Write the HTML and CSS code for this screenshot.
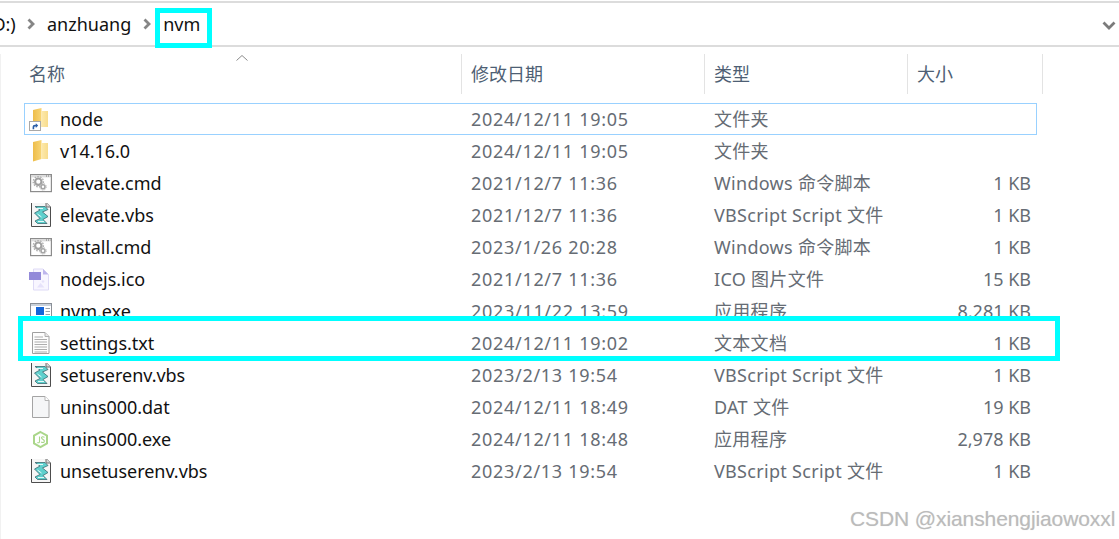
FILE: index.html
```html
<!DOCTYPE html>
<html lang="zh-CN">
<head>
<meta charset="utf-8">
<title>nvm</title>
<link rel="stylesheet" href="styles.css">
</head>
<body>
<svg class="defs" width="0" height="0" aria-hidden="true">
  <defs>
    <linearGradient id="fold-l" x1="0" y1="0" x2="1" y2="0"><stop offset="0" stop-color="#eebd4a"/><stop offset="1" stop-color="#f7d576"/></linearGradient>
    <linearGradient id="fold-r" x1="0" y1="0" x2="1" y2="0"><stop offset="0" stop-color="#fde9ac"/><stop offset="1" stop-color="#f8dc8c"/></linearGradient>
  </defs>
  <symbol id="folder" viewBox="0 0 24 24">
    <path d="M5 3 L13.5 1 V20 L5 22.5 Z" fill="url(#fold-l)"/>
    <path d="M13.5 4 H20 V20 H13.5 Z" fill="url(#fold-r)"/>
  </symbol>
  <symbol id="cmd" viewBox="0 0 24 24">
    <rect x="2.6" y="3.6" width="20.8" height="17" fill="#fff" stroke="#8c8c8c" stroke-width="1.2"/>
    <rect x="3" y="4" width="20" height="2.4" fill="#dcdcdc"/>
    <path d="M18 5 H19 M20 5 H21 M22 5 H22.6" stroke="#777"/>
    <circle cx="10.3" cy="10.7" r="3.2" fill="none" stroke="#a0a0a0" stroke-width="2.2"/>
    <circle cx="10.3" cy="10.7" r="5.1" fill="none" stroke="#b0b0b0" stroke-width="1.4" stroke-dasharray="1.6 1.2"/>
    <circle cx="15" cy="15.8" r="2" fill="#fff" stroke="#a6a6a6" stroke-width="1.6"/>
    <circle cx="15" cy="15.8" r="3.3" fill="none" stroke="#bbb" stroke-width="1" stroke-dasharray="1.3 1"/>
  </symbol>
  <symbol id="vbs" viewBox="0 0 24 24">
    <path d="M3.5 -.5 H18 L22.5 4 V23.5 H3.5 Z" fill="#f6f6f6" stroke="#4d4d4d"/>
    <path d="M18 -.5 V4 H22.5" fill="#d8d8d8" stroke="#6f6f6f"/>
    <path d="M7 3.5 H17 L20 6.5 L14.5 9 L20 13.5 L15 16.5 L19 20.5 H9.5 L7 18 L12 15.5 L6.5 10 L12 7 Z" fill="#5fd0cd" stroke="#3a6a70" stroke-width=".8"/>
    <path d="M9 5.5 H15 M9.5 11 L13.5 14 M10 18.5 H16" stroke="#e2f8f7" fill="none"/>
  </symbol>
  <symbol id="ico" viewBox="0 0 24 24">
    <path d="M5.5 2 H15 L20.5 7.5 V23 H5.5 Z" fill="#f8f6ff" stroke="#dedaf6"/>
    <path d="M15 2 V7.5 H20.5 Z" fill="#bdb6ec"/>
    <rect x="1" y="5" width="12" height="8" fill="#938ad9"/>
    <path d="M9 20.5 L12.5 16 L16.5 20.5 Z" fill="#e6e2fa"/>
    <circle cx="15" cy="14.5" r="1.3" fill="#e6e2fa"/>
  </symbol>
  <symbol id="exe" viewBox="0 0 24 24">
    <rect x="2.5" y="4.5" width="21" height="19" fill="#fff" stroke="#8a8f96"/>
    <rect x="3" y="5" width="20" height="2" fill="#c9d1da"/>
    <rect x="8" y="8" width="8" height="8" fill="#1565d8"/>
    <path d="M17.5 9.5 H22 M17.5 12.5 H22 M17.5 15.5 H22 M5 19.5 H22" stroke="#9aa2ab"/>
  </symbol>
  <symbol id="txt" viewBox="0 0 24 24">
    <path d="M4.5 1.5 H17 L21 5.5 V22.5 H4.5 Z" fill="#fdfdfd" stroke="#a0a0a0"/>
    <path d="M17 1.5 V5.5 H21" fill="#e8e8e8" stroke="#b0b0b0"/>
    <path d="M6.5 6 H15 M6.5 8.5 H19 M6.5 11 H19 M6.5 13.5 H19 M6.5 16 H19 M6.5 18.5 H19 M6.5 21 H19" stroke="#adadad"/>
  </symbol>
  <symbol id="dat" viewBox="0 0 24 24">
    <path d="M4.5 1.5 H17 L21 5.5 V22.5 H4.5 Z" fill="#f5f6f7" stroke="#a4a4a4"/>
    <path d="M17 1.5 V5.5 H21" fill="#fff" stroke="#b5b5b5"/>
  </symbol>
  <symbol id="node" viewBox="0 0 24 24">
    <path d="M12.5 5 L19 8.7 V16.3 L12.5 20 L6 16.3 V8.7 Z" fill="#fff" stroke="#aad68a" stroke-width="2"/>
    <path d="M11.5 9.5 V14.5 Q11.5 16.3 9.3 15.6 M16.5 10.4 Q14.4 9 13.5 10.6 Q13.5 12 15 12.4 Q16.8 13 16.2 14.8 Q15 16.2 13.2 15" fill="none" stroke="#aad68a" stroke-width="1.1"/>
  </symbol>
</svg>

<header class="crumbs">
  <span class="crumb-cut">(D:)</span>
  <svg class="chev" viewBox="0 0 8 12"><path d="M1.5 1.5 L6 6 L1.5 10.5" /></svg>
  <span class="crumb">anzhuang</span>
  <svg class="chev" viewBox="0 0 8 12"><path d="M1.5 1.5 L6 6 L1.5 10.5" /></svg>
  <span class="crumb current">nvm</span>
  <svg class="chev-down" viewBox="0 0 14 9"><path d="M1.5 1.5 L7 7 L12.5 1.5" /></svg>
</header>

<main class="list">
  <div class="head">
    <div class="hcell hname">名称
      <svg class="sort" viewBox="0 0 12 6"><path d="M.5 5.5 L6 .5 L11.5 5.5"/></svg>
    </div>
    <div class="hcell">修改日期</div>
    <div class="hcell">类型</div>
    <div class="hcell">大小</div>
  </div>

  <div class="row selected">
    <span class="icon-wrap">
      <svg class="icon"><use href="#folder"/></svg>
      <span class="shortcut"><svg viewBox="0 0 10 10"><path d="M2 9 V6 Q2 3.5 5 3.5 H6 V1.5 L9 4.5 L6 7.5 V5.5 H5 Q4 5.5 4 7 V9 Z" fill="#2b5ea8"/></svg></span>
    </span>
    <span class="name">node</span><span class="date">2024/12/11 19:05</span><span class="type">文件夹</span><span class="size"></span>
  </div>
  <div class="row"><span class="icon-wrap"><svg class="icon"><use href="#folder"/></svg></span><span class="name">v14.16.0</span><span class="date">2024/12/11 19:05</span><span class="type">文件夹</span><span class="size"></span></div>
  <div class="row"><span class="icon-wrap"><svg class="icon"><use href="#cmd"/></svg></span><span class="name">elevate.cmd</span><span class="date">2021/12/7 11:36</span><span class="type">Windows 命令脚本</span><span class="size">1 KB</span></div>
  <div class="row"><span class="icon-wrap"><svg class="icon"><use href="#vbs"/></svg></span><span class="name">elevate.vbs</span><span class="date">2021/12/7 11:36</span><span class="type">VBScript Script 文件</span><span class="size">1 KB</span></div>
  <div class="row"><span class="icon-wrap"><svg class="icon"><use href="#cmd"/></svg></span><span class="name">install.cmd</span><span class="date">2023/1/26 20:28</span><span class="type">Windows 命令脚本</span><span class="size">1 KB</span></div>
  <div class="row"><span class="icon-wrap"><svg class="icon"><use href="#ico"/></svg></span><span class="name">nodejs.ico</span><span class="date">2021/12/7 11:36</span><span class="type">ICO 图片文件</span><span class="size">15 KB</span></div>
  <div class="row"><span class="icon-wrap"><svg class="icon"><use href="#exe"/></svg></span><span class="name">nvm.exe</span><span class="date">2023/11/22 13:59</span><span class="type">应用程序</span><span class="size">8,281 KB</span></div>
  <div class="row marked"><span class="mark-box"></span><span class="icon-wrap"><svg class="icon"><use href="#txt"/></svg></span><span class="name">settings.txt</span><span class="date">2024/12/11 19:02</span><span class="type">文本文档</span><span class="size">1 KB</span></div>
  <div class="row"><span class="icon-wrap"><svg class="icon"><use href="#vbs"/></svg></span><span class="name">setuserenv.vbs</span><span class="date">2023/2/13 19:54</span><span class="type">VBScript Script 文件</span><span class="size">1 KB</span></div>
  <div class="row"><span class="icon-wrap"><svg class="icon"><use href="#dat"/></svg></span><span class="name">unins000.dat</span><span class="date">2024/12/11 18:49</span><span class="type">DAT 文件</span><span class="size">19 KB</span></div>
  <div class="row"><span class="icon-wrap"><svg class="icon"><use href="#node"/></svg></span><span class="name">unins000.exe</span><span class="date">2024/12/11 18:48</span><span class="type">应用程序</span><span class="size">2,978 KB</span></div>
  <div class="row"><span class="icon-wrap"><svg class="icon"><use href="#vbs"/></svg></span><span class="name">unsetuserenv.vbs</span><span class="date">2023/2/13 19:54</span><span class="type">VBScript Script 文件</span><span class="size">1 KB</span></div>
</main>

<div class="watermark">CSDN @xianshengjiaowoxxl</div>
</body>
</html>
```

FILE: styles.css
```css
* { box-sizing: border-box; }

html, body {
  margin: 0;
  padding: 0;
  width: 1119px;
  height: 539px;
  overflow: hidden;
  background: #fff;
}

body {
  position: relative;
  font-family: "Noto Sans", "Noto Sans CJK SC", sans-serif;
  font-size: 18px;
  color: #111;
}

.defs { position: absolute; }

/* breadcrumb bar */
.crumbs {
  height: 46px;
  margin-top: 1px;
  border-top: 2px solid #dcdcdc;
  border-bottom: 2px solid #dcdcdc;
  display: flex;
  align-items: center;
  position: relative;
}

.crumb-cut {
  margin-left: -13px;
  width: 28px;
  flex: none;
  white-space: nowrap;
}

.crumb { white-space: nowrap; line-height: 24px; }

.chev {
  width: 8px;
  height: 12px;
  flex: none;
  margin: 0 12px;
}
.chev path { fill: none; stroke: #868686; stroke-width: 2.8; }

.crumb.current { position: relative; }
.crumb.current::after {
  content: "";
  position: absolute;
  left: -8px;
  right: -12px;
  top: -4px;
  bottom: -12px;
  border: 5px solid #00ffff;
}

.chev-down {
  position: absolute;
  right: 3px;
  top: 18px;
  width: 14px;
  height: 9px;
}
.chev-down path { fill: none; stroke: #7b7b7b; stroke-width: 2.8; }

/* list */
.list {
  position: relative;
  padding-left: 24px;
  border-left: 1px solid #f1f1f1;
  height: 490px;
}

.head {
  display: grid;
  grid-template-columns: 461px 243px 203px 135px;
  margin: 7px 0 9px -24px;
  height: 40px;
}

.hcell {
  border-right: 1px solid #e3e3e3;
  color: #4e5f74;
  line-height: 40px;
  padding-left: 9px;
  position: relative;
}
.hcell.hname { padding-left: 28px; }

.sort {
  position: absolute;
  left: 235px;
  top: 1px;
  width: 12px;
  height: 6px;
}
.sort path { fill: none; stroke: #8a8a8a; stroke-width: 1; }

.row {
  display: grid;
  grid-template-columns: 35px 411px 243px 203px 114px;
  align-items: center;
  height: 32px;
  width: 1013px;
  margin-left: -1px;
  border: 1px solid transparent;
  position: relative;
  line-height: 30px;
  white-space: nowrap;
}

.row.selected { border-color: #99d1ff; }

.icon-wrap {
  position: relative;
  display: flex;
  width: 24px;
  height: 24px;
  margin-left: 3px;
}

.icon { width: 24px; height: 24px; display: block; overflow: visible; }

.shortcut {
  position: absolute;
  left: 1px;
  bottom: 0;
  width: 12px;
  height: 10px;
  background: #fff;
  border: 1px solid #a8a8a8;
}
.shortcut svg { display: block; width: 10px; height: 8px; }

.name { color: #111; letter-spacing: -0.03px; }
.date { color: #666c74; letter-spacing: 0.7px; }
.type { color: #666c74; letter-spacing: 0.3px; }
.size { color: #666c74; text-align: right; }

/* highlighted row */
.row.marked { z-index: 1; }
.mark-box {
  position: absolute;
  left: -7px;
  right: -24px;
  top: -12px;
  bottom: -3px;
  border: 5px solid #00ffff;
  background: #fff;
  z-index: -1;
}

.watermark {
  position: absolute;
  left: 850px;
  top: 505px;
  font-family: "Liberation Sans", sans-serif;
  font-size: 21px;
  letter-spacing: -0.1px;
  line-height: 28px;
  color: #bbb;
  white-space: nowrap;
  text-shadow: 0 0 1px #ddd;
}
```
